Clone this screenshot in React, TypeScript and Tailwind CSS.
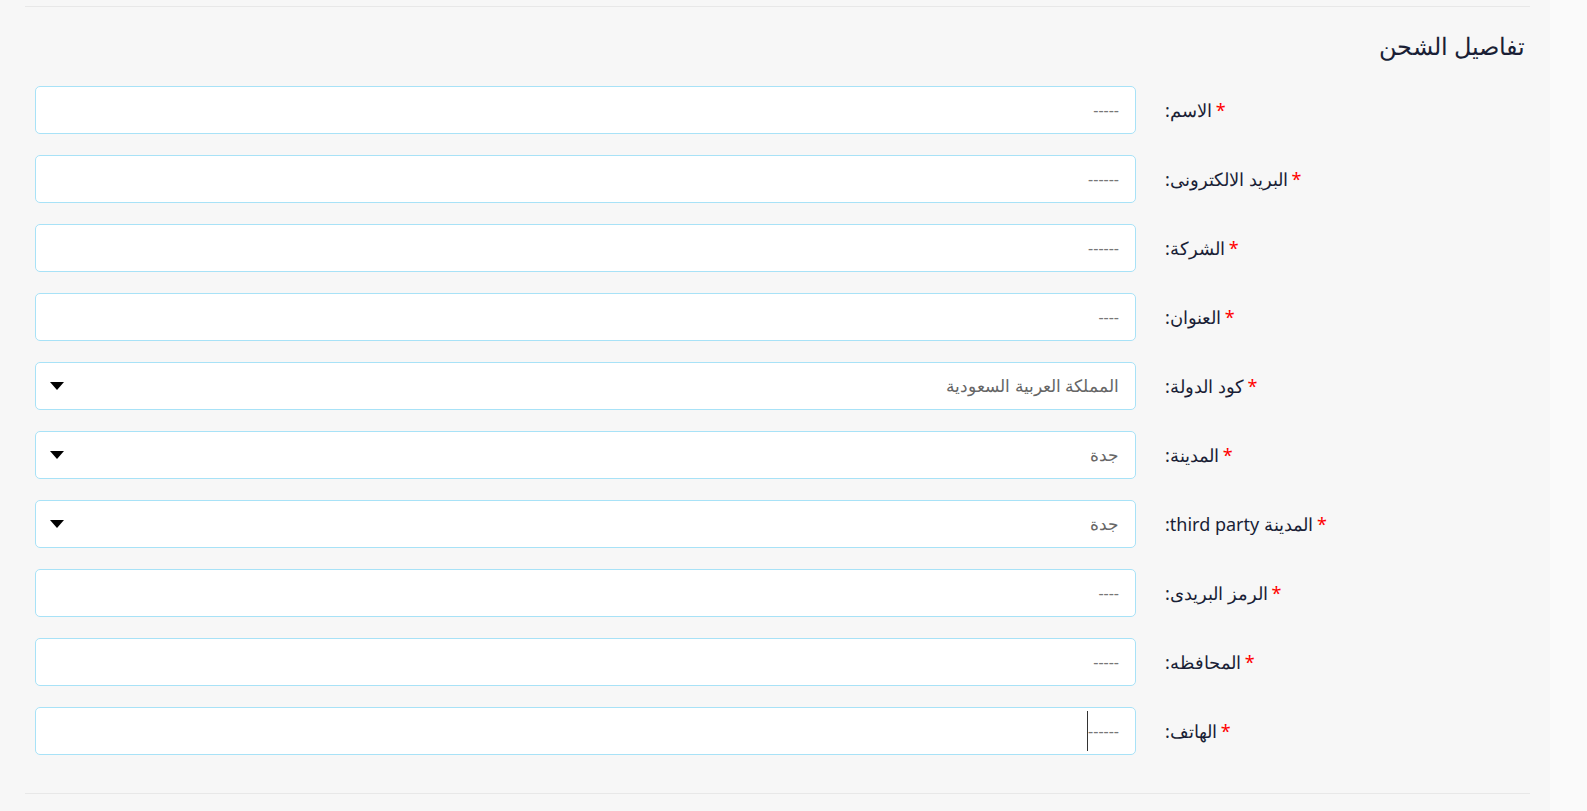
const rows: { label: string; value: string; select?: boolean; cursor?: boolean }[] = [
  { label: "الاسم:", value: "-----" },
  { label: "البريد الالكترونى:", value: "------" },
  { label: "الشركة:", value: "------" },
  { label: "العنوان:", value: "----" },
  { label: "كود الدولة:", value: "المملكة العربية السعودية", select: true },
  { label: "المدينة:", value: "جدة", select: true },
  { label: "المدينة third party:", value: "جدة", select: true },
  { label: "الرمز البريدى:", value: "----" },
  { label: "المحافظه:", value: "-----" },
  { label: "الهاتف:", value: "------", cursor: true },
];

export default function App() {
  return (
    <div className="w-[1587px] h-[811px] bg-[#fafafa] overflow-hidden" style={{ fontFamily: '"Noto Sans", "Open Sans", sans-serif' }}>
      <div className="w-[1550px] h-[811px] bg-[#f7f7f7] pt-[6px]">
        <div dir="rtl" className="ml-[25px] w-[1505px] border-t border-[#e8e8e8]">
          <h2 className="pt-[22px] h-[79px] text-[24px] text-[#1a1f36] pr-[5px] leading-[34px]">تفاصيل الشحن</h2>
          <div className="flex flex-col gap-[21px] pr-[5px]">
            {rows.map((r) => (
              <div key={r.label} className="flex items-center">
                <div className="w-[360px] flex justify-end text-[18px] text-[#1a1f36]">
                  <div>
                    <span className="text-[#ff0000] ml-1">*</span>
                    {r.label}
                  </div>
                </div>
                <div className="mr-[29px] w-[1101px] h-[48px] bg-white border border-[#a8e2f7] rounded-[5px] flex items-center justify-between px-[16px]">
                  <span className={r.select ? "text-[17px] text-[#666]" : "text-[16px] text-[#777] flex items-center"}>
                    {r.value}
                    {r.cursor && <span className="inline-block w-px h-[40px] bg-[#333]"></span>}
                  </span>
                  {r.select && (
                    <svg width="14" height="10" viewBox="0 0 14 10" className="ml-[-2px]">
                      <path d="M0 1h14L7 9z" fill="#000" />
                    </svg>
                  )}
                </div>
              </div>
            ))}
          </div>
        </div>
        <div className="ml-[25px] w-[1505px] border-t border-[#e8e8e8] mt-[38px]"></div>
      </div>
    </div>
  );
}
